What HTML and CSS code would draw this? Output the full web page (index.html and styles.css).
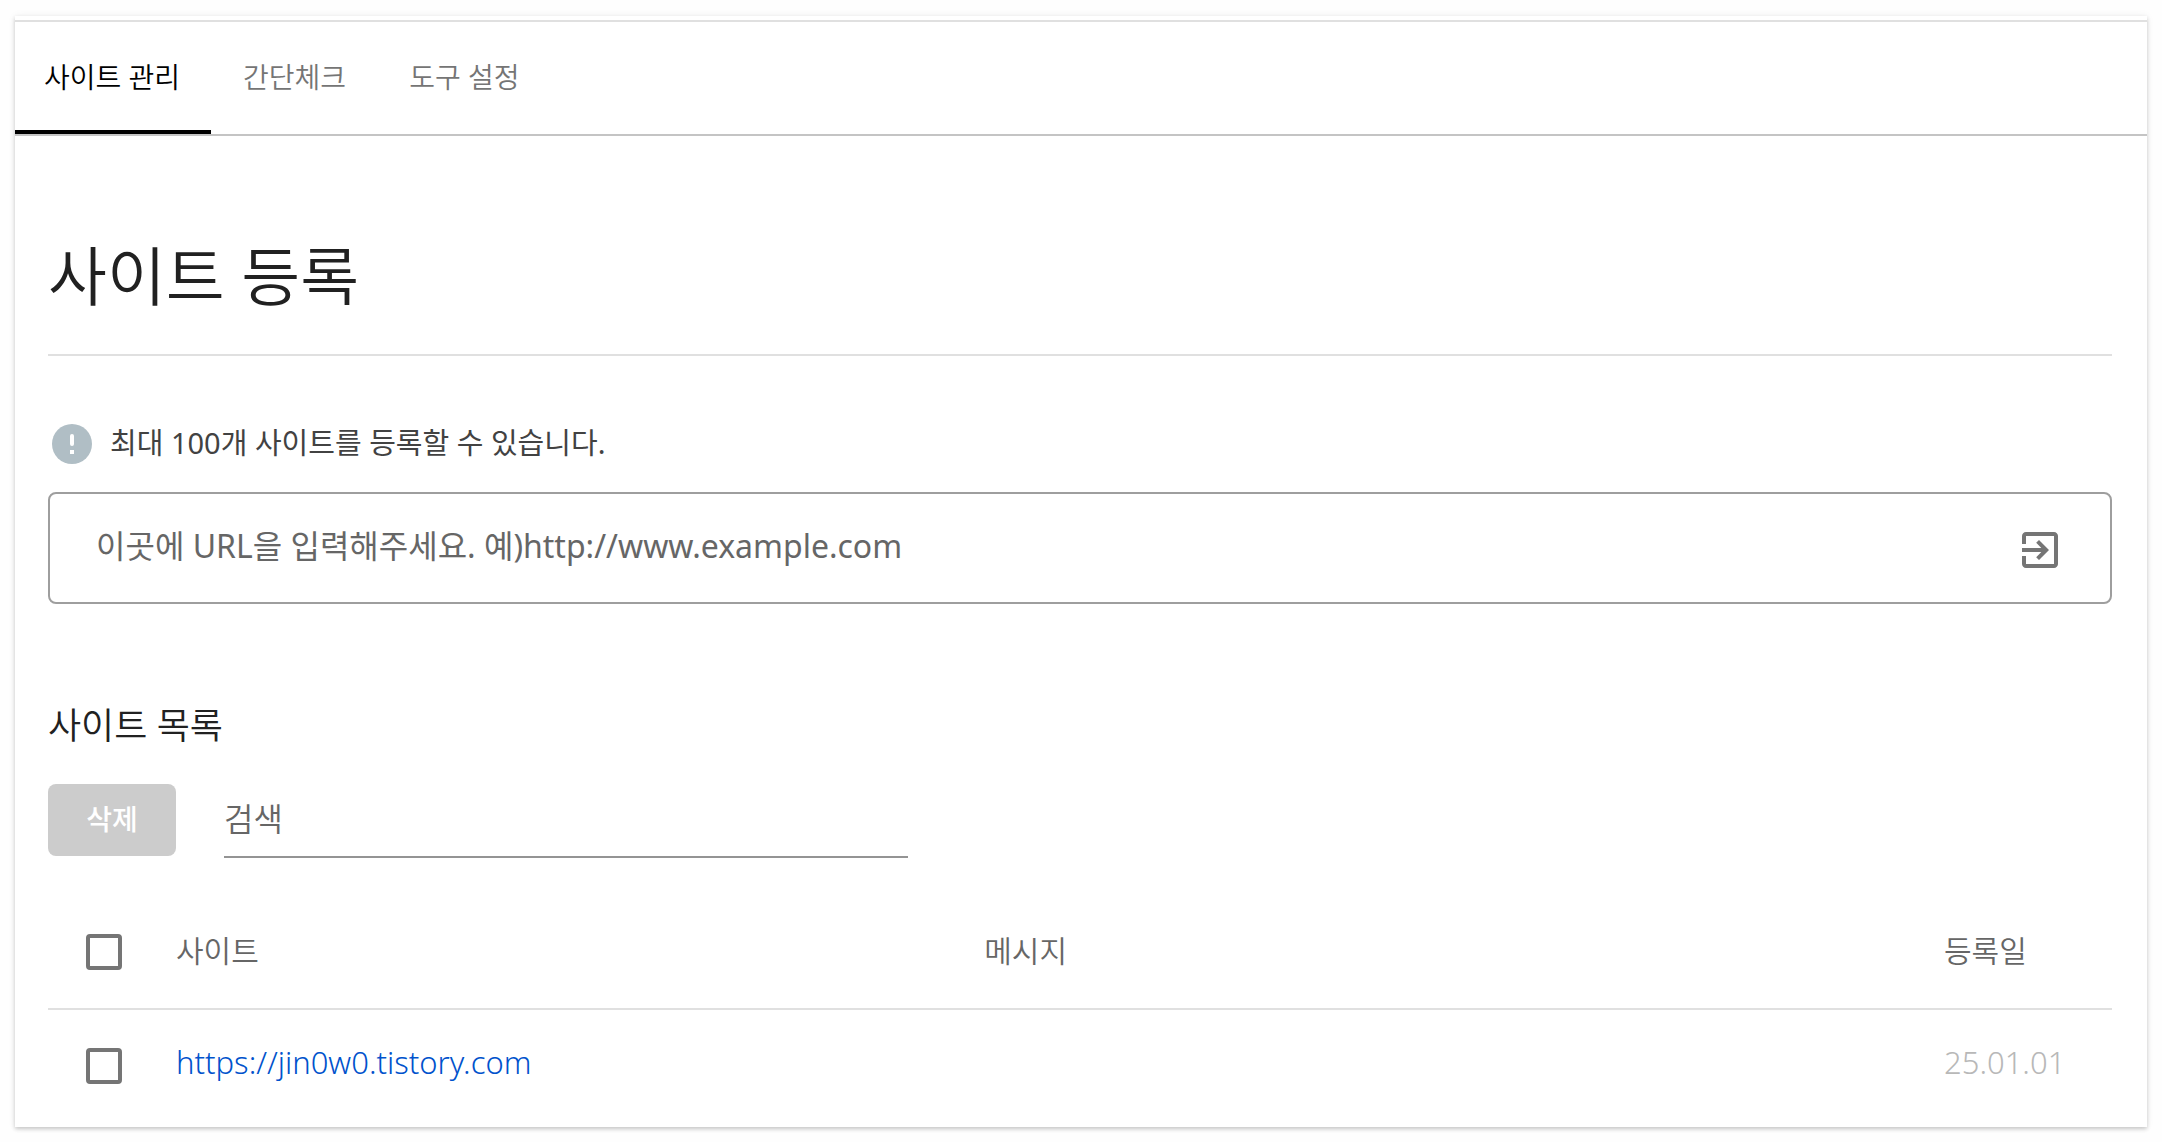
FILE: index.html
```html
<!DOCTYPE html>
<html lang="ko">
<head>
<meta charset="utf-8">
<meta name="viewport" content="width=device-width, initial-scale=1">
<title>사이트 관리</title>
<link rel="stylesheet" href="styles.css">
</head>
<body>
<main class="card">
  <nav class="tabs">
    <a class="tab tab-active" href="#sites" aria-current="page">사이트 관리</a>
    <a class="tab" href="#check">간단체크</a>
    <a class="tab" href="#tools">도구 설정</a>
  </nav>
  <div class="content">
    <h1 class="title">사이트 등록</h1>
    <p class="notice">
      <svg class="notice-icon" viewBox="0 0 40 40" aria-hidden="true">
        <circle cx="20" cy="20" r="20" fill="#b0bec5"/>
        <rect x="18" y="10" width="4" height="12" rx="2" fill="#fff"/>
        <rect x="18" y="26" width="4" height="4" fill="#fff"/>
      </svg>
      <label for="site-url">최대 100개 사이트를 등록할 수 있습니다.</label>
    </p>
    <form class="url-box">
      <input class="url-input" id="site-url" type="text" placeholder="이곳에 URL을 입력해주세요. 예)http://www.example.com">
      <button class="url-submit" type="button" aria-label="등록">
        <svg class="submit-icon" viewBox="3 3 18 18" aria-hidden="true">
          <path fill="#757575" d="M10.09 15.59L11.5 17l5-5-5-5-1.41 1.41L12.67 11H3v2h9.67l-2.58 2.59zM19 3H5c-1.11 0-2 .9-2 2v4h2V5h14v14H5v-4H3v4c0 1.100.89 2 2 2h14c1.100 0 2-.9 2-2V5c0-1.100-.9-2-2-2z"/>
        </svg>
      </button>
    </form>
    <h2 class="subtitle">사이트 목록</h2>
    <div class="toolbar">
      <button class="delete" type="button" disabled>삭제</button>
      <input class="search" type="search" placeholder="검색" aria-label="검색">
    </div>
    <table class="sites">
      <thead>
        <tr>
          <th class="col-check"><input class="check" type="checkbox" aria-label="모두 선택"></th>
          <th class="col-site">사이트</th>
          <th class="col-message">메시지</th>
          <th class="col-date">등록일</th>
        </tr>
      </thead>
      <tbody>
        <tr>
          <td><input class="check" type="checkbox" aria-label="https://jin0w0.tistory.com 선택"></td>
          <td class="site"><a class="site-link" href="https://jin0w0.tistory.com">https://jin0w0.tistory.com</a></td>
          <td></td>
          <td class="date">25.01.01</td>
        </tr>
      </tbody>
    </table>
  </div>
</main>
</body>
</html>
```

FILE: styles.css
```css
* {
  box-sizing: border-box;
}

body {
  margin: 0;
  padding: 16px 15px;
  background: #fefefe;
  color: #212121;
  font-family: "Noto Sans", "Noto Sans CJK KR", sans-serif;
  font-size: 28px;
  font-weight: 350;
  line-height: 40px;
}

input,
button {
  font: inherit;
}

.card {
  padding-top: 4px;
  background: #fff;
  box-shadow: 0 2px 4px rgba(0, 0, 0, 0.2), 0 0 8px rgba(0, 0, 0, 0.06);
}

.tabs {
  display: flex;
  gap: 3px;
  border-top: 2px solid #e0e0e0;
  border-bottom: 2px solid #c4c4c4;
}

.tab {
  padding: 35px 31px 33px 29px;
  border-bottom: 4px solid transparent;
  color: #757575;
  text-decoration: none;
}

.tab-active {
  border-bottom-color: #000;
  color: #000;
}

.content {
  padding: 92px 35px 5px 33px;
}

.title {
  margin: 0;
  padding-bottom: 30px;
  border-bottom: 2px solid #e0e0e0;
  font-size: 64px;
  font-weight: 350;
  line-height: 96px;
}

.notice {
  display: flex;
  align-items: center;
  gap: 18px;
  margin: 68px 0 28px;
  padding-left: 4px;
  color: #424242;
  font-size: 29px;
  font-weight: 400;
}

.notice label {
  padding-bottom: 2px;
  line-height: 38px;
}

.notice-icon {
  width: 40px;
  height: 40px;
}

.url-box {
  display: flex;
  align-items: center;
  height: 112px;
  padding: 0 52px 0 46px;
  border: 2px solid #9e9e9e;
  border-radius: 8px;
}

.url-input {
  flex: 1;
  padding: 0 0 4px;
  border: 0;
  background: none;
  outline: 0;
  font-size: 32px;
  font-weight: 400;
}

.url-input::placeholder,
.search::placeholder {
  color: #666;
  opacity: 1;
}

.url-submit {
  display: flex;
  padding: 4px 0 0;
  border: 0;
  background: none;
}

.submit-icon {
  width: 36px;
  height: 36px;
}

.subtitle {
  margin: 98px 0 34px;
  font-size: 36px;
  font-weight: 350;
  line-height: 48px;
}

.toolbar {
  display: flex;
  align-items: flex-start;
  gap: 48px;
}

.delete {
  width: 128px;
  height: 72px;
  padding: 0 0 2px;
  border: 0;
  border-radius: 8px;
  background: #ccc;
  color: #fff;
  font-weight: 500;
}

.search {
  width: 33.14%;
  height: 74px;
  padding: 0 0 4px;
  border: 0;
  border-bottom: 2px solid #949494;
  border-radius: 0;
  appearance: none;
  background: none;
  outline: 0;
  font-size: 32px;
}

.sites {
  width: 100%;
  margin-top: 38px;
  border-collapse: collapse;
  table-layout: fixed;
  font-size: 30px;
  text-align: left;
}

.sites th,
.sites td {
  height: 113px;
  padding: 0;
  color: #666;
  font-weight: 350;
}

.sites th:not(.col-check) {
  padding-bottom: 2px;
}

.sites thead tr {
  border-bottom: 2px solid #e0e0e0;
}

.col-check {
  width: 128px;
}

.col-message {
  width: 46.5%;
}

.col-date {
  width: 168px;
}

.sites .site,
.sites .date {
  padding-bottom: 8px;
  font-size: 31px;
}

.sites .date {
  color: #b8b8b8;
}

.check {
  display: block;
  width: 36px;
  height: 36px;
  margin: 0 0 0 38px;
  border: 4px solid #757575;
  border-radius: 4px;
  appearance: none;
  background: #fff;
}

.site-link {
  color: #0052cc;
  text-decoration: none;
}
```
